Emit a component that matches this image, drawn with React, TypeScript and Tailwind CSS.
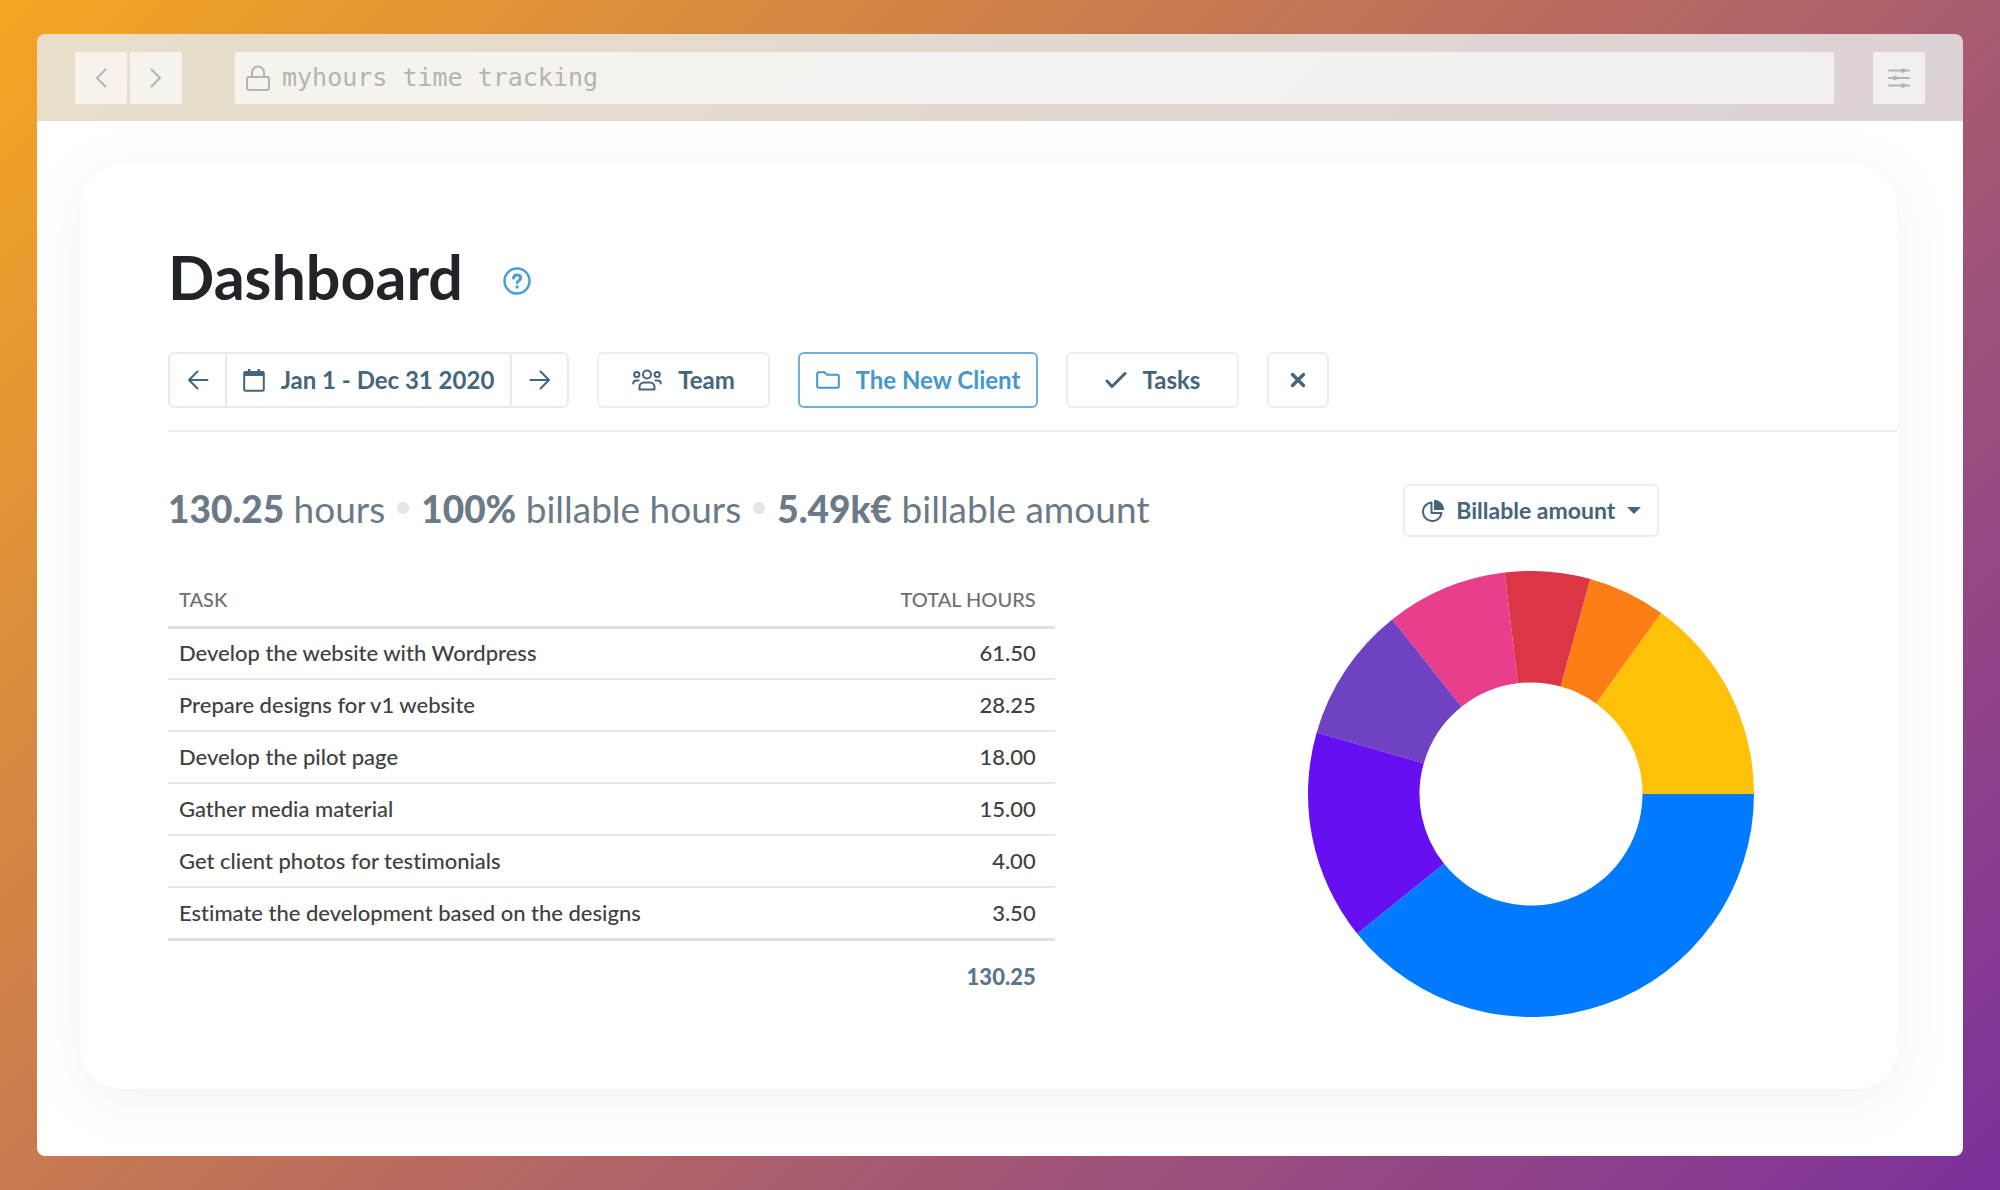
import { useState } from 'react';
import type { ReactNode } from 'react';
import clsx from 'clsx';

type Task = {
  name: string;
  hours: number;
};

type Slice = {
  from: number;
  to: number;
  color: string;
};

const TASKS: Task[] = [
  { name: 'Develop the website with Wordpress', hours: 61.5 },
  { name: 'Prepare designs for v1 website', hours: 28.25 },
  { name: 'Develop the pilot page', hours: 18 },
  { name: 'Gather media material', hours: 15 },
  { name: 'Get client photos for testimonials', hours: 4 },
  { name: 'Estimate the development based on the designs', hours: 3.5 },
];

// Angles in degrees, counter-clockwise from three o'clock
const SLICES: Slice[] = [
  { from: 0, to: 54.3, color: '#ffc107' },
  { from: 54.3, to: 74.6, color: '#fd7e14' },
  { from: 74.6, to: 96.8, color: '#dc3545' },
  { from: 96.8, to: 128.5, color: '#e83e8c' },
  { from: 128.5, to: 164, color: '#6f42c1' },
  { from: 164, to: 218.8, color: '#6610f2' },
  { from: 218.8, to: 360, color: '#007bff' },
];

const slicePath = ({ from, to }: Slice) => {
  const point = (radius: number, angle: number) => {
    const rad = (angle * Math.PI) / 180;
    return `${(radius * Math.cos(rad)).toFixed(2)} ${(-radius * Math.sin(rad)).toFixed(2)}`;
  };
  return `M${point(200, from)}A200 200 0 0 0 ${point(200, to)}L${point(100, to)}A100 100 0 0 1 ${point(100, from)}Z`;
};

type IconProps = {
  viewBox: string;
  className: string;
  strokeWidth?: number;
  children: ReactNode;
};

const Icon = ({ viewBox, className, strokeWidth = 2, children }: IconProps) => (
  <svg
    viewBox={viewBox}
    className={clsx('shrink-0', className)}
    fill="none"
    stroke="currentColor"
    strokeWidth={strokeWidth}
    strokeLinecap="round"
    strokeLinejoin="round"
    aria-hidden="true"
  >
    {children}
  </svg>
);

const BrowserBar = () => {
  const [address, setAddress] = useState('myhours time tracking');
  const buttonClass =
    'flex size-[52px] items-center justify-center rounded-xs bg-white/64';

  return (
    <header className="flex items-center rounded-t-lg bg-[#e6e9e9]/84 px-[38px] pt-[18px] pb-[17px] text-[#b3b3b3]">
      <div className="flex gap-[3px]">
        <button type="button" aria-label="Back" className={buttonClass}>
          <Icon viewBox="0 0 12 20" className="h-5 w-3">
            <path d="M10.500 1.500 2 10l8.500 8.500" />
          </Icon>
        </button>
        <button type="button" aria-label="Forward" className={buttonClass}>
          <Icon viewBox="0 0 12 20" className="h-5 w-3">
            <path d="M1.500 1.500 10 10l-8.500 8.500" />
          </Icon>
        </button>
      </div>
      <label className="mr-[39px] ml-[53px] flex h-[52px] flex-1 items-center gap-3 rounded-xs bg-white/64 pl-[11px]">
        <Icon viewBox="0 0 24 26" className="h-[26px] w-6">
          <rect x="1" y="12" width="22" height="13" rx="2" />
          <path d="M6 12V7.500a6 6 0 0 1 12 0V12" />
        </Icon>
        <input
          aria-label="Address"
          value={address}
          onChange={(event) => setAddress(event.target.value)}
          className="min-w-0 flex-1 bg-transparent font-['DejaVu_Sans_Mono',monospace] text-[25px] outline-none"
        />
      </label>
      <button type="button" aria-label="Settings" className={buttonClass}>
        <Icon viewBox="0 0 24 20" className="h-5 w-6">
          <path d="M2 2.500h20M2 10h20M2 17.500h20" />
          <g fill="currentColor" stroke="none">
            <circle cx="16" cy="2.500" r="2.300" />
            <circle cx="8" cy="10" r="2.300" />
            <circle cx="16" cy="17.500" r="2.300" />
          </g>
        </Icon>
      </button>
    </header>
  );
};

type FilterButtonProps = {
  icon: ReactNode;
  label: string;
  active?: boolean;
  className: string;
};

const FilterButton = ({ icon, label, active, className }: FilterButtonProps) => (
  <button
    type="button"
    className={clsx(
      'flex h-14 items-center justify-center gap-4 rounded-md border-2',
      active
        ? 'border-[#6fb0d8] text-[#4697cb]'
        : 'border-[#eaeef2] text-[#44657b]',
      className
    )}
  >
    {icon}
    {label}
  </button>
);

const Filters = () => (
  <div className="flex flex-wrap gap-7 border-b-2 border-[#ebedee] pb-[22px] text-[24px] leading-7 font-bold">
    <div className="flex h-14 rounded-md border-2 border-[#e3ebf1] text-[#44657b]">
      <button
        type="button"
        aria-label="Previous period"
        className="flex w-[55px] items-center justify-center"
      >
        <Icon viewBox="0 0 22 20" className="h-5 w-[22px]">
          <path d="M20.500 10H2M10.500 1.500 2 10l8.500 8.500" />
        </Icon>
      </button>
      <button
        type="button"
        className="flex w-[287px] items-center justify-center gap-4 border-x-2 border-[#e3ebf1]"
      >
        <Icon viewBox="0 0 22 24" className="h-6 w-[22px]">
          <rect x="1.200" y="4" width="19.600" height="18.800" rx="1.500" />
          <path
            d="M1 8V5a2 2 0 0 1 2-2h2V1h2.500v2h7V1H17v2h2a2 2 0 0 1 2 2v3Z"
            fill="currentColor"
            stroke="none"
          />
        </Icon>
        Jan 1 - Dec 31 2020
      </button>
      <button
        type="button"
        aria-label="Next period"
        className="flex w-[55px] items-center justify-center"
      >
        <Icon viewBox="0 0 22 20" className="h-5 w-[22px]">
          <path d="M1.500 10H20M11.500 1.500 20 10l-8.500 8.500" />
        </Icon>
      </button>
    </div>
    <FilterButton
      label="Team"
      className="w-[173px]"
      icon={
        <Icon viewBox="0 0 30 22" className="h-[22px] w-[30px]">
          <circle cx="15" cy="5.500" r="4" />
          <circle cx="4.800" cy="5.500" r="2.600" />
          <circle cx="25.200" cy="5.500" r="2.600" />
          <path d="M7.500 20.500v-2.500a4.500 4.500 0 0 1 4.500-4.500h6a4.500 4.500 0 0 1 4.500 4.500v2.500ZM1.200 14.500c0-2 1.200-3 3-3h2.300M28.800 14.500c0-2-1.200-3-3-3h-2.300" />
        </Icon>
      }
    />
    <FilterButton
      label="The New Client"
      active
      className="w-60"
      icon={
        <Icon viewBox="0 0 24 18" className="h-[18px] w-6">
          <path d="M1.200 15.300V2.700c0-.8.700-1.500 1.500-1.500h5.800l2.500 2.600h10.300c.8 0 1.500.7 1.500 1.500v10c0 .8-.7 1.500-1.500 1.500H2.700c-.8 0-1.500-.7-1.500-1.500Z" />
        </Icon>
      }
    />
    <FilterButton
      label="Tasks"
      className="w-[173px]"
      icon={
        <Icon viewBox="0 0 22 18" className="h-[18px] w-[22px]" strokeWidth={3}>
          <path d="m2 10 5 5.500L20 2.500" />
        </Icon>
      }
    />
    <button
      type="button"
      aria-label="Clear filters"
      className="flex h-14 w-[62px] items-center justify-center rounded-md border-2 border-[#eaeef2] text-[#44657b]"
    >
      <Icon viewBox="0 0 16 16" className="size-4" strokeWidth={3.5}>
        <path d="m2.500 2.500 11 11M13.500 2.500l-11 11" />
      </Icon>
    </button>
  </div>
);

const Dot = () => (
  <span className="mb-[2px] size-3 rounded-full bg-[#e1e6ea]" aria-hidden="true" />
);

const Summary = () => (
  <div className="flex flex-wrap items-center gap-x-3 text-[37px] leading-[50px] whitespace-nowrap text-[#6c7a87]">
    <p>
      <strong className="font-black">130.25</strong> hours
    </p>
    <Dot />
    <p>
      <strong className="font-black">100%</strong> billable hours
    </p>
    <Dot />
    <p>
      <strong className="font-black">5.49k€</strong> billable amount
    </p>
  </div>
);

const TaskTable = () => {
  const total = TASKS.reduce((sum, task) => sum + task.hours, 0);

  return (
    <table className="mt-[39px] w-8/9 text-[22px] leading-7 text-[#404040]">
      <thead>
        <tr className="h-[54px] border-b-3 border-[#e0e0e0] text-[20px] text-[#707070]">
          <th scope="col" className="px-[11px] text-left font-medium">
            TASK
          </th>
          <th scope="col" className="px-[19px] text-right font-medium">
            TOTAL HOURS
          </th>
        </tr>
      </thead>
      <tbody>
        {TASKS.map((task) => (
          <tr
            key={task.name}
            className="h-[52px] border-b-2 border-[#e6e6e6] last:border-b-3 last:border-[#e0e0e0]"
          >
            <td className="px-[11px] font-medium">{task.name}</td>
            <td className="px-[19px] text-right font-medium">
              {task.hours.toFixed(2)}
            </td>
          </tr>
        ))}
      </tbody>
      <tfoot>
        <tr className="h-[74px] font-black text-[#5b7689]">
          <td />
          <td className="px-[19px] text-right">{total.toFixed(2)}</td>
        </tr>
      </tfoot>
    </table>
  );
};

const AmountChart = () => (
  <div className="flex flex-col items-center gap-[34px]">
    <label className="flex h-[53px] items-center rounded-md border-2 border-[#eaeef2] px-4 text-[23px] font-bold text-[#44657b]">
      <Icon viewBox="0 0 24 24" className="size-6">
        <path d="M10.500 3.500a9.300 9.300 0 1 0 10 10.500h-10Z" />
        <path
          d="M13 .8a10.200 10.200 0 0 1 10.200 10.200H13Z"
          fill="currentColor"
          stroke="none"
        />
      </Icon>
      <select
        aria-label="Chart value"
        className="appearance-none bg-transparent px-[11px] outline-none"
      >
        <option>Billable amount</option>
      </select>
      <svg viewBox="0 0 14 7" className="h-[7px] w-[14px]" fill="currentColor" aria-hidden="true">
        <path d="M0 0h14L7 7Z" />
      </svg>
    </label>
    <svg viewBox="-200 -200 400 400" className="size-[446px]" role="img" aria-label="Billable amount by task">
      {SLICES.map((slice) => (
        <path key={slice.color} d={slicePath(slice)} fill={slice.color} />
      ))}
    </svg>
  </div>
);

export default function App() {
  return (
    <div className="flex min-h-screen flex-col bg-[linear-gradient(135deg,#f5a623,#7c309c)] px-[37px] py-[34px] font-['Lato',sans-serif] [font-variant-ligatures:none]">
      <BrowserBar />
      <div className="flex flex-1 flex-col overflow-hidden rounded-b-lg bg-white pt-11 pr-[66px] pb-[67px] pl-11">
        <main className="flex-1 rounded-[40px] bg-white pt-[76px] pb-14 pl-[87px] shadow-[0_10px_56px_rgba(60,90,120,0.08)]">
          <div className="mb-10 flex items-center gap-10">
            <h1 className="text-[61px] leading-[71px] font-bold text-[#212529]">
              Dashboard
            </h1>
            <button type="button" aria-label="Help" className="pt-2 text-[#4a9fd8]">
              <Icon viewBox="0 0 28 28" className="size-7" strokeWidth={3}>
                <circle cx="14" cy="14" r="12.500" strokeWidth="2.500" />
                <path d="M10.500 11c.2-2 1.700-3 3.600-3 2 0 3.600 1.100 3.600 2.900 0 2.500-3.400 2.500-3.500 4.900" />
                <path d="M14.100 19.900v.2" strokeWidth="3.400" />
              </Icon>
            </button>
          </div>
          <Filters />
          <div className="mt-[52px] grid grid-cols-[15fr_11fr]">
            <section>
              <Summary />
              <TaskTable />
            </section>
            <AmountChart />
          </div>
        </main>
      </div>
    </div>
  );
}
